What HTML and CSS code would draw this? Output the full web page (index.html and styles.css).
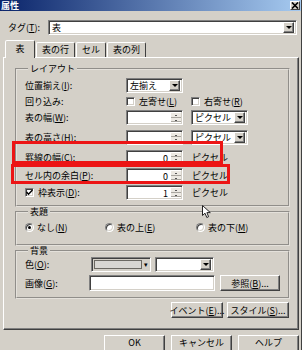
FILE: index.html
```html
<!DOCTYPE html>
<html lang="ja">
<head>
    <meta charset="UTF-8">
    <title>属性</title>
    <link rel="stylesheet" href="styles.css">
</head>
<body>
<div class="dialog">
    <div class="titlebar">
        <span class="title">属性</span>
        <span class="close-btn">
            <svg width="8" height="7" viewBox="0 0 8 7"><path d="M1 0.5 L7 6.5 M7 0.5 L1 6.5" stroke="#000" stroke-width="1.6"/></svg>
        </span>
    </div>

    <div class="tag-row">
        <span class="tag-label">タグ(<u>T</u>):</span>
        <div class="combo sunken tag-combo">
            <span class="combo-text">表</span>
            <span class="dd raised"><i class="tri"></i></span>
        </div>
    </div>

    <div class="tabs">
        <span class="tab active">表</span>
        <span class="tab">表の行</span>
        <span class="tab">セル</span>
        <span class="tab">表の列</span>
    </div>

    <div class="panel">
        <fieldset class="group layout">
            <legend>レイアウト</legend>
            <div class="layout-grid">
                <div class="row">
                    <span class="lbl">位置揃え(<u>I</u>):</span>
                    <div class="combo sunken ctl">
                        <span class="combo-text">左揃え</span>
                        <span class="dd raised"><i class="tri"></i></span>
                    </div>
                </div>
                <div class="row">
                    <span class="lbl">回り込み:</span>
                    <span class="check-item wrap-left"><i class="box sunken"></i>左寄せ(<u>L</u>)</span>
                    <span class="check-item"><i class="box sunken"></i>右寄せ(<u>R</u>)</span>
                </div>
                <div class="row">
                    <span class="lbl">表の幅(<u>W</u>):</span>
                    <div class="spin sunken ctl"><span class="val"></span><span class="arrows"><i></i><i></i></span></div>
                    <div class="combo sunken unit">
                        <span class="combo-text">ピクセル</span>
                        <span class="dd raised"><i class="tri"></i></span>
                    </div>
                </div>
                <div class="row">
                    <span class="lbl">表の高さ(<u>H</u>):</span>
                    <div class="spin sunken ctl"><span class="val"></span><span class="arrows"><i></i><i></i></span></div>
                    <div class="combo sunken unit">
                        <span class="combo-text">ピクセル</span>
                        <span class="dd raised"><i class="tri"></i></span>
                    </div>
                </div>
                <div class="row">
                    <span class="lbl">罫線の幅(<u>C</u>):</span>
                    <div class="spin sunken ctl"><span class="val">0</span><span class="arrows"><i></i><i></i></span></div>
                    <span class="unit-text">ピクセル</span>
                </div>
                <div class="row">
                    <span class="lbl">セル内の余白(<u>P</u>):</span>
                    <div class="spin sunken ctl"><span class="val">0</span><span class="arrows"><i></i><i></i></span></div>
                    <span class="unit-text">ピクセル</span>
                </div>
                <div class="row">
                    <span class="lbl check-item">
                        <i class="box sunken">
                            <svg width="7" height="7" viewBox="0 0 7 7"><path d="M0.5 3 L2.5 5.2 L6.5 1" fill="none" stroke="#000" stroke-width="1.5"/></svg>
                        </i>枠表示(<u>D</u>):
                    </span>
                    <div class="spin sunken ctl"><span class="val">1</span><span class="arrows"><i></i><i></i></span></div>
                    <span class="unit-text">ピクセル</span>
                </div>
            </div>
        </fieldset>

        <fieldset class="group caption">
            <legend>表題</legend>
            <div class="radio-row">
                <span class="radio-item r-none"><i class="radio sunken on"></i>なし(<u>N</u>)</span>
                <span class="radio-item r-top"><i class="radio sunken"></i>表の上(<u>E</u>)</span>
                <span class="radio-item"><i class="radio sunken"></i>表の下(<u>M</u>)</span>
            </div>
        </fieldset>

        <fieldset class="group background">
            <legend>背景</legend>
            <div class="bg-row">
                <span class="bg-lbl">色(<u>O</u>):</span>
                <div class="color-pick sunken">
                    <span class="swatch"></span>
                    <span class="mini-dd">▾</span>
                </div>
                <div class="combo sunken color-sel">
                    <span class="combo-text"></span>
                    <span class="dd raised"><i class="tri"></i></span>
                </div>
            </div>
            <div class="bg-row img-row">
                <span class="bg-lbl">画像(<u>G</u>):</span>
                <div class="sunken img-input"></div>
                <button class="btn browse-btn">参照(<u>B</u>)...</button>
            </div>
        </fieldset>

        <div class="panel-buttons">
            <button class="btn event-btn">イベント(<u>E</u>)...</button>
            <button class="btn style-btn">スタイル(<u>S</u>)...</button>
        </div>
    </div>

    <div class="dialog-buttons">
        <button class="btn dlg-btn">OK</button>
        <button class="btn dlg-btn">キャンセル</button>
        <button class="btn dlg-btn">ヘルプ</button>
    </div>

    <div class="mark mark-border"></div>
    <div class="mark mark-padding"></div>

    <svg class="cursor" width="10" height="14" viewBox="0 0 10 14">
        <path d="M0.5 0.5 L0.5 10.5 L3 8.2 L4.8 12.5 L6.6 11.7 L4.9 7.6 L8.3 7.6 Z" fill="#fff" stroke="#222" stroke-width="1"/>
    </svg>
</div>
</body>
</html>
```

FILE: styles.css
```css
body
{
    margin: 0;
    background: #d4d0c8;
    font-family: "Noto Sans CJK JP", "Noto Sans", sans-serif;
    font-size: 9px;
    color: #000;
}
.dialog
{
    position: relative;
    width: 302px;
    height: 350px;
    overflow: hidden;
    box-sizing: border-box;
    border-right: 1px solid #404040;
}

/* 3D borders */
.sunken
{
    box-sizing: border-box;
    background: #fff;
    border: 1px solid;
    border-color: #808080 #fff #fff #808080;
    box-shadow: inset 1px 1px 0 #404040, inset -1px -1px 0 #d4d0c8;
}
.raised
{
    box-sizing: border-box;
    background: #d4d0c8;
    border: 1px solid;
    border-color: #fff #404040 #404040 #fff;
    box-shadow: inset -1px -1px 0 #808080;
}

/* title bar */
.titlebar
{
    height: 11px;
    display: flex;
    align-items: center;
    justify-content: space-between;
    background: linear-gradient(to right, #0a246a, #a6caf0);
    color: #fff;
    font-weight: bold;
}
.title
{
    margin-left: 1px;
    font-size: 9px;
    line-height: 11px;
}
.close-btn
{
    width: 10px;
    height: 9px;
    margin-right: 1px;
    display: flex;
    align-items: center;
    justify-content: center;
    box-sizing: border-box;
    background: #d4d0c8;
    border: 1px solid;
    border-color: #fff #404040 #404040 #fff;
}

/* tag row */
.tag-row
{
    display: flex;
    align-items: center;
    height: 15px;
    margin-top: 9px;
    padding-left: 8px;
}
.tag-label
{
    width: 40px;
}
.combo
{
    display: flex;
    align-items: center;
    height: 15px;
    padding: 2px;
}
.combo-text
{
    flex: 1;
    padding-left: 1px;
    line-height: 11px;
    white-space: nowrap;
    overflow: hidden;
}
.tag-combo
{
    flex: 1;
    margin-right: 4px;
}
.dd
{
    width: 11px;
    height: 11px;
    display: flex;
    align-items: center;
    justify-content: center;
}
.tri
{
    width: 0;
    height: 0;
    border-left: 3px solid transparent;
    border-right: 3px solid transparent;
    border-top: 3px solid #000;
}

/* tabs */
.tabs
{
    display: flex;
    align-items: flex-end;
    height: 17px;
    margin-top: 5px;
    padding-left: 5px;
}
.tab
{
    height: 15px;
    padding: 0 5px;
    line-height: 14px;
    box-sizing: border-box;
    border: 1px solid;
    border-bottom: none;
    border-color: #fff #404040 transparent #fff;
    border-radius: 2px 2px 0 0;
    margin-right: 1px;
}
.tab.active
{
    height: 18px;
    width: 30px;
    margin-bottom: -1px;
    position: relative;
    background: #d4d0c8;
    text-align: center;
    line-height: 15px;
}

/* panel */
.panel
{
    box-sizing: border-box;
    height: 273px;
    margin: 0 2px 0 3px;
    padding: 6px 8px 0 11px;
    border: 1px solid;
    border-color: #fff #404040 #404040 #fff;
    box-shadow: inset -1px -1px 0 #808080;
}
.group
{
    box-sizing: border-box;
    margin: 0;
    border: 2px groove #e4e1db;
    min-width: 0;
}
.group legend
{
    margin-left: 3px;
    padding: 0 2px;
    line-height: 10px;
}
.layout
{
    height: 143px;
    padding: 3px 8px 0;
}
.layout-grid
{
    display: grid;
    grid-template-rows: 17px 15px 17px 22px 18px 19px 15px;
}
.row
{
    display: flex;
    align-items: center;
}
.lbl
{
    width: 101px;
    flex-shrink: 0;
    white-space: nowrap;
}
.ctl
{
    width: 57px;
    margin-right: 8px;
}
.unit
{
    width: 57px;
}
.unit-text
{
    padding-left: 1px;
}
.check-item
{
    display: flex;
    align-items: center;
    white-space: nowrap;
}
.wrap-left
{
    width: 65px;
}
.box
{
    width: 9px;
    height: 9px;
    margin-right: 4px;
    display: flex;
    align-items: center;
    justify-content: center;
}

/* spinner */
.spin
{
    display: flex;
    height: 15px;
    padding: 2px 1px 2px 2px;
}
.val
{
    flex: 1;
    text-align: right;
    padding-right: 3px;
    line-height: 11px;
}
.arrows
{
    width: 10px;
    display: flex;
    flex-direction: column;
    background: #ece9e3;
}
.arrows i
{
    flex: 1;
    border-bottom: 1px solid #a8a59f;
    position: relative;
}
.arrows i::after
{
    content: "";
    position: absolute;
    left: 4px;
    top: 2px;
    width: 2px;
    height: 1px;
    background: #555;
}

/* caption radios */
.caption
{
    height: 39px;
    padding: 3px 8px 0;
}
.radio-row
{
    display: flex;
    align-items: center;
    height: 15px;
}
.radio-item
{
    display: flex;
    align-items: center;
    white-space: nowrap;
}
.r-none
{
    width: 80px;
}
.r-top
{
    width: 91px;
}
.radio
{
    width: 9px;
    height: 9px;
    border-radius: 50%;
    margin-right: 3px;
    display: flex;
    align-items: center;
    justify-content: center;
}
.radio.on::after
{
    content: "";
    width: 3px;
    height: 3px;
    border-radius: 50%;
    background: #000;
}

/* background */
.background
{
    height: 53px;
    padding: 1px 8px 0;
}
.bg-row
{
    display: flex;
    align-items: center;
    height: 15px;
}
.img-row
{
    height: 16px;
    margin-top: 3px;
}
.bg-lbl
{
    width: 64px;
}
.color-pick
{
    display: flex;
    align-items: center;
    width: 60px;
    height: 15px;
    margin-left: 2px;
    padding: 2px;
    background: #d4d0c8;
}
.swatch
{
    flex: 1;
    height: 100%;
    box-sizing: border-box;
    border: 1px solid #6b6862;
    background: #d8d6d2;
}
.mini-dd
{
    width: 6px;
    font-size: 7px;
    text-align: right;
    line-height: 9px;
}
.color-sel
{
    width: 59px;
    margin-left: 4px;
}
.img-input
{
    width: 126px;
    height: 16px;
}
.browse-btn
{
    width: 60px;
    height: 16px;
    margin-left: 5px;
}

/* buttons */
.btn
{
    display: flex;
    align-items: center;
    justify-content: center;
    padding: 0;
    font: inherit;
    color: #000;
    box-sizing: border-box;
    background: #d4d0c8;
    border: 1px solid;
    border-color: #fff #404040 #404040 #fff;
    box-shadow: inset -1px -1px 0 #808080;
    white-space: nowrap;
}
.panel-buttons
{
    display: flex;
    justify-content: flex-end;
    gap: 4px;
    margin-top: 3px;
    padding-right: 1px;
}
.event-btn
{
    width: 52px;
    height: 16px;
}
.style-btn
{
    width: 62px;
    height: 16px;
}
.dialog-buttons
{
    display: flex;
    justify-content: flex-end;
    gap: 6px;
    margin-top: 5px;
    margin-right: 2px;
}
.dlg-btn
{
    width: 61px;
    height: 21px;
    padding-bottom: 6px;
}

/* annotation marks over the dialog */
.mark
{
    position: absolute;
    box-sizing: border-box;
    border: 3px solid #ec1515;
}
.mark-border
{
    left: 12px;
    top: 141px;
    width: 211px;
    height: 23px;
}
.mark-padding
{
    left: 11px;
    top: 164px;
    width: 219px;
    height: 20px;
}
.cursor
{
    position: absolute;
    left: 202px;
    top: 205px;
}
```
